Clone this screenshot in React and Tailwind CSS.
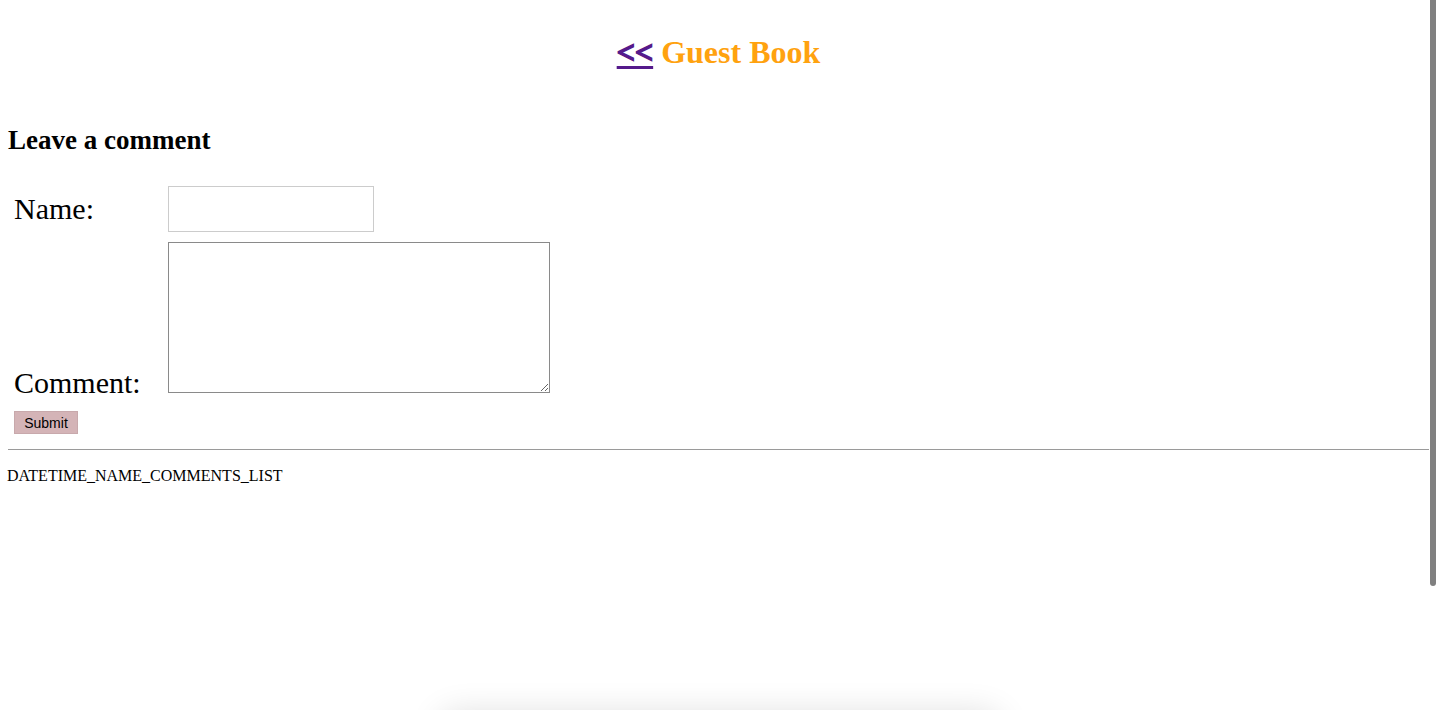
export default function App() {
  return (
    <div className="relative min-h-[710px] bg-white px-[8px] font-['Liberation_Serif',serif] text-black">
      <h1 className="pt-[34px] text-center text-[32px] font-bold leading-[37px]">
        <a href="#" className="font-bold text-[#551a8b] underline decoration-[3px] underline-offset-[3px] [-webkit-text-stroke:1.6px_#551a8b]">&lt;&lt;</a>{" "}
        <span className="text-[#ffa20f]">Guest Book</span>
      </h1>
      <h2 className="mt-[54px] text-[27px] font-bold leading-[31px]">Leave a comment</h2>
      <form className="mt-[30px] flex flex-col">
        <div className="flex items-center">
          <label className="w-[160px] pl-[6px] text-[30px] leading-[30px]">Name:</label>
          <input type="text" className="h-[46px] w-[206px] border border-[#cccccc] bg-white outline-none" />
        </div>
        <div className="mt-[10px] flex items-end">
          <label className="-mb-[5px] w-[160px] pl-[6px] text-[30px] leading-[30px]">Comment:</label>
          <textarea className="h-[151px] w-[382px] resize border border-[#8a8a8a] bg-white outline-none" />
        </div>
        <div className="ml-[6px] mt-[18px]">
          <button type="button" className="flex h-[23px] w-[64px] items-center justify-center border border-[#c8a9ac] bg-[#d4b4b7] font-['Liberation_Sans',sans-serif] text-[14px] leading-none text-black">
            Submit
          </button>
        </div>
      </form>
      <hr className="mt-[15px] border-0 border-t border-[#9a9a9a]" />
      <div className="-ml-px mt-[17px] text-[16px] leading-[18px]">DATETIME_NAME_COMMENTS_LIST</div>
      <div className="pointer-events-none fixed right-[1px] top-0 h-[586px] w-[6px] rounded-b-full bg-[#808080]" />
      <div className="pointer-events-none fixed left-[440px] top-[714px] h-[40px] w-[560px] rounded-2xl bg-white shadow-[0_0_34px_rgba(0,0,0,0.14)]" />
    </div>
  );
}
